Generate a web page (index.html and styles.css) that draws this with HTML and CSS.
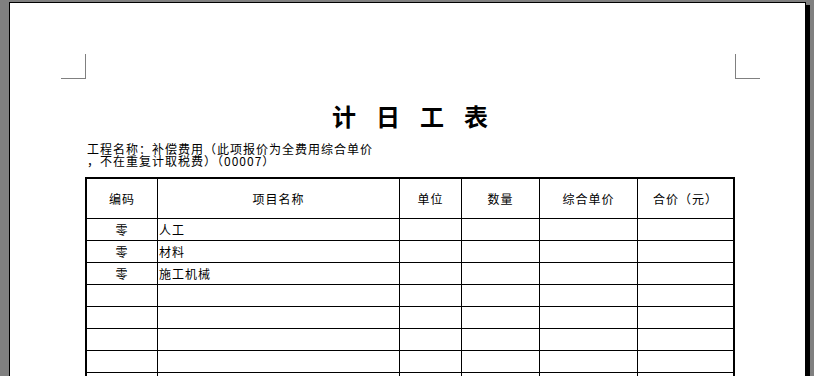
FILE: index.html
```html
<!DOCTYPE html>
<html lang="zh-CN">
<head>
<meta charset="utf-8">
<title>计日工表</title>
<link rel="stylesheet" href="styles.css">
</head>
<body>
<div class="page">
  <div class="marks">
    <span class="mark mark-left"></span>
    <span class="mark mark-right"></span>
  </div>
  <div class="content">
    <h1 class="title">计日工表</h1>
    <p class="project">工程名称：补偿费用（此项报价为全费用综合单价<br>，不在重复计取税费）（00007）</p>
    <table class="sheet">
      <thead>
        <tr>
          <th class="c1">编码</th>
          <th class="c2">项目名称</th>
          <th class="c3">单位</th>
          <th class="c4">数量</th>
          <th class="c5">综合单价</th>
          <th class="c6">合价（元）</th>
        </tr>
      </thead>
      <tbody>
        <tr><td class="code">零</td><td class="name">人工</td><td></td><td></td><td></td><td></td></tr>
        <tr><td class="code">零</td><td class="name">材料</td><td></td><td></td><td></td><td></td></tr>
        <tr><td class="code">零</td><td class="name">施工机械</td><td></td><td></td><td></td><td></td></tr>
        <tr><td></td><td></td><td></td><td></td><td></td><td></td></tr>
        <tr><td></td><td></td><td></td><td></td><td></td><td></td></tr>
        <tr><td></td><td></td><td></td><td></td><td></td><td></td></tr>
        <tr><td></td><td></td><td></td><td></td><td></td><td></td></tr>
        <tr><td></td><td></td><td></td><td></td><td></td><td></td></tr>
        <tr><td></td><td></td><td></td><td></td><td></td><td></td></tr>
      </tbody>
    </table>
  </div>
</div>
</body>
</html>
```

FILE: styles.css
```css
html, body {
  margin: 0;
  padding: 0;
  height: 376px;
  overflow: hidden;
  background: #808080;
}

body {
  font-family: "Noto Sans CJK SC", "Liberation Sans", sans-serif;
  color: #000;
}

.page {
  margin: 2px 0 0 9px;
  width: 795px;
  height: 600px;
  background: #fff;
  border: 1px solid #000;
  box-shadow: 4px 3px 0 #000;
}

.marks {
  display: flex;
  justify-content: space-between;
  margin-top: 51px;
  padding: 0 45px 0 51px;
}

.mark {
  display: block;
  width: 24px;
  height: 24px;
  border-bottom: 1px solid #808080;
}

.mark-left {
  border-right: 1px solid #808080;
}

.mark-right {
  border-left: 1px solid #808080;
}

.content {
  width: 650px;
  margin-left: 75px;
}

.title {
  margin: 24px 0 0 0;
  font-size: 24px;
  line-height: 26px;
  font-weight: 700;
  text-align: center;
  letter-spacing: 20px;
  text-indent: 20px;
}

.project {
  margin: 14px 0 0 2px;
  font-size: 12px;
  line-height: 12px;
  letter-spacing: 1px;
}

.sheet {
  margin-top: 10px;
  width: 650px;
  table-layout: fixed;
  border-collapse: separate;
  border-spacing: 0;
  border: 2px solid #000;
  font-size: 12px;
  letter-spacing: 1px;
}

.sheet th,
.sheet td {
  box-sizing: border-box;
  padding: 0;
  border-right: 1px solid #000;
  border-bottom: 1px solid #000;
  height: 22px;
  line-height: 21px;
  font-weight: 400;
  white-space: nowrap;
}

.sheet th:last-child,
.sheet td:last-child {
  border-right: none;
}

.sheet th {
  height: 40px;
  text-align: center;
}

.c1 { width: 71px; }
.c2 { width: 242px; }
.c3 { width: 62px; }
.c4 { width: 78px; }
.c5 { width: 98px; }
.c6 { width: 95px; }

.sheet td.code {
  text-align: center;
}

.sheet td.name {
  text-align: left;
  padding-left: 1px;
}
```
